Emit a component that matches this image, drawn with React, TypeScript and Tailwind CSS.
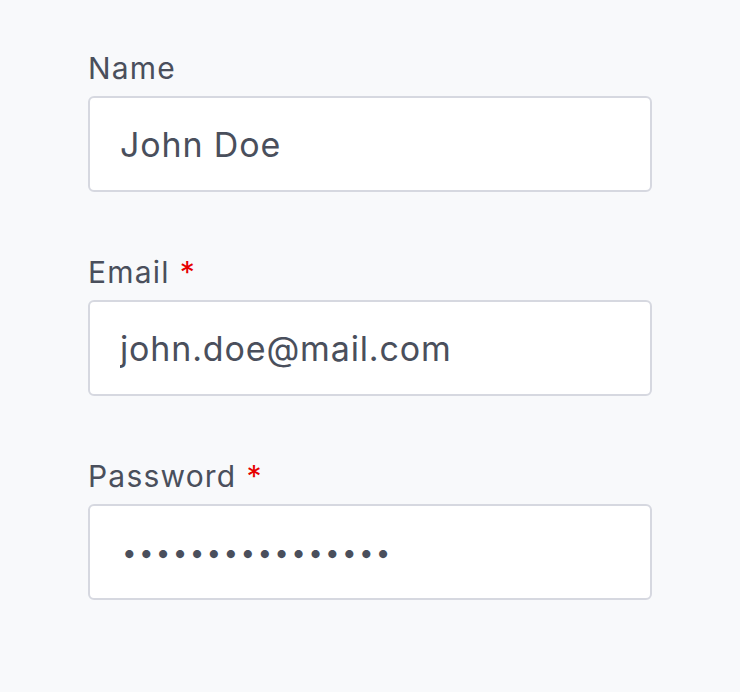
import React from "react";

const font = { fontFamily: "Inter, 'Noto Sans', sans-serif" };

function Field({ label, required, type, value }: { label: string; required?: boolean; type: string; value: string }) {
  const isPw = type === "password";
  return (
    <div className="flex flex-col">
      <label className="text-[30px] leading-[36px] tracking-[0.04em] text-[#4a4f5c] mb-[10px]">
        {label}
        {required && <span className="text-[#e60000] ml-[10px]">*</span>}
      </label>
      <input
        type={type}
        defaultValue={value}
        readOnly
        className={
          isPw
            ? "w-[564px] h-[96px] rounded-[6px] border-2 border-[#d6d8e0] bg-white pl-[32px] pr-[31px] text-[26px] tracking-[2.3px] text-[#4a4f5c] outline-none"
            : "w-[564px] h-[96px] rounded-[6px] border-2 border-[#d6d8e0] bg-white px-[30px] text-[34px] tracking-[0.025em] text-[#4a4f5c] outline-none"
        }
        style={font}
      />
    </div>
  );
}

export default function App() {
  return (
    <div className="min-h-[692px] w-[740px] bg-[#f8f9fb] pl-[88px] pt-[50px]" style={font}>
      <div className="flex flex-col gap-[62px]">
        <Field label="Name" type="text" value="John Doe" />
        <Field label="Email" required type="text" value="john.doe@mail.com" />
        <Field label="Password" required type="password" value="passwordpassword" />
      </div>
    </div>
  );
}
